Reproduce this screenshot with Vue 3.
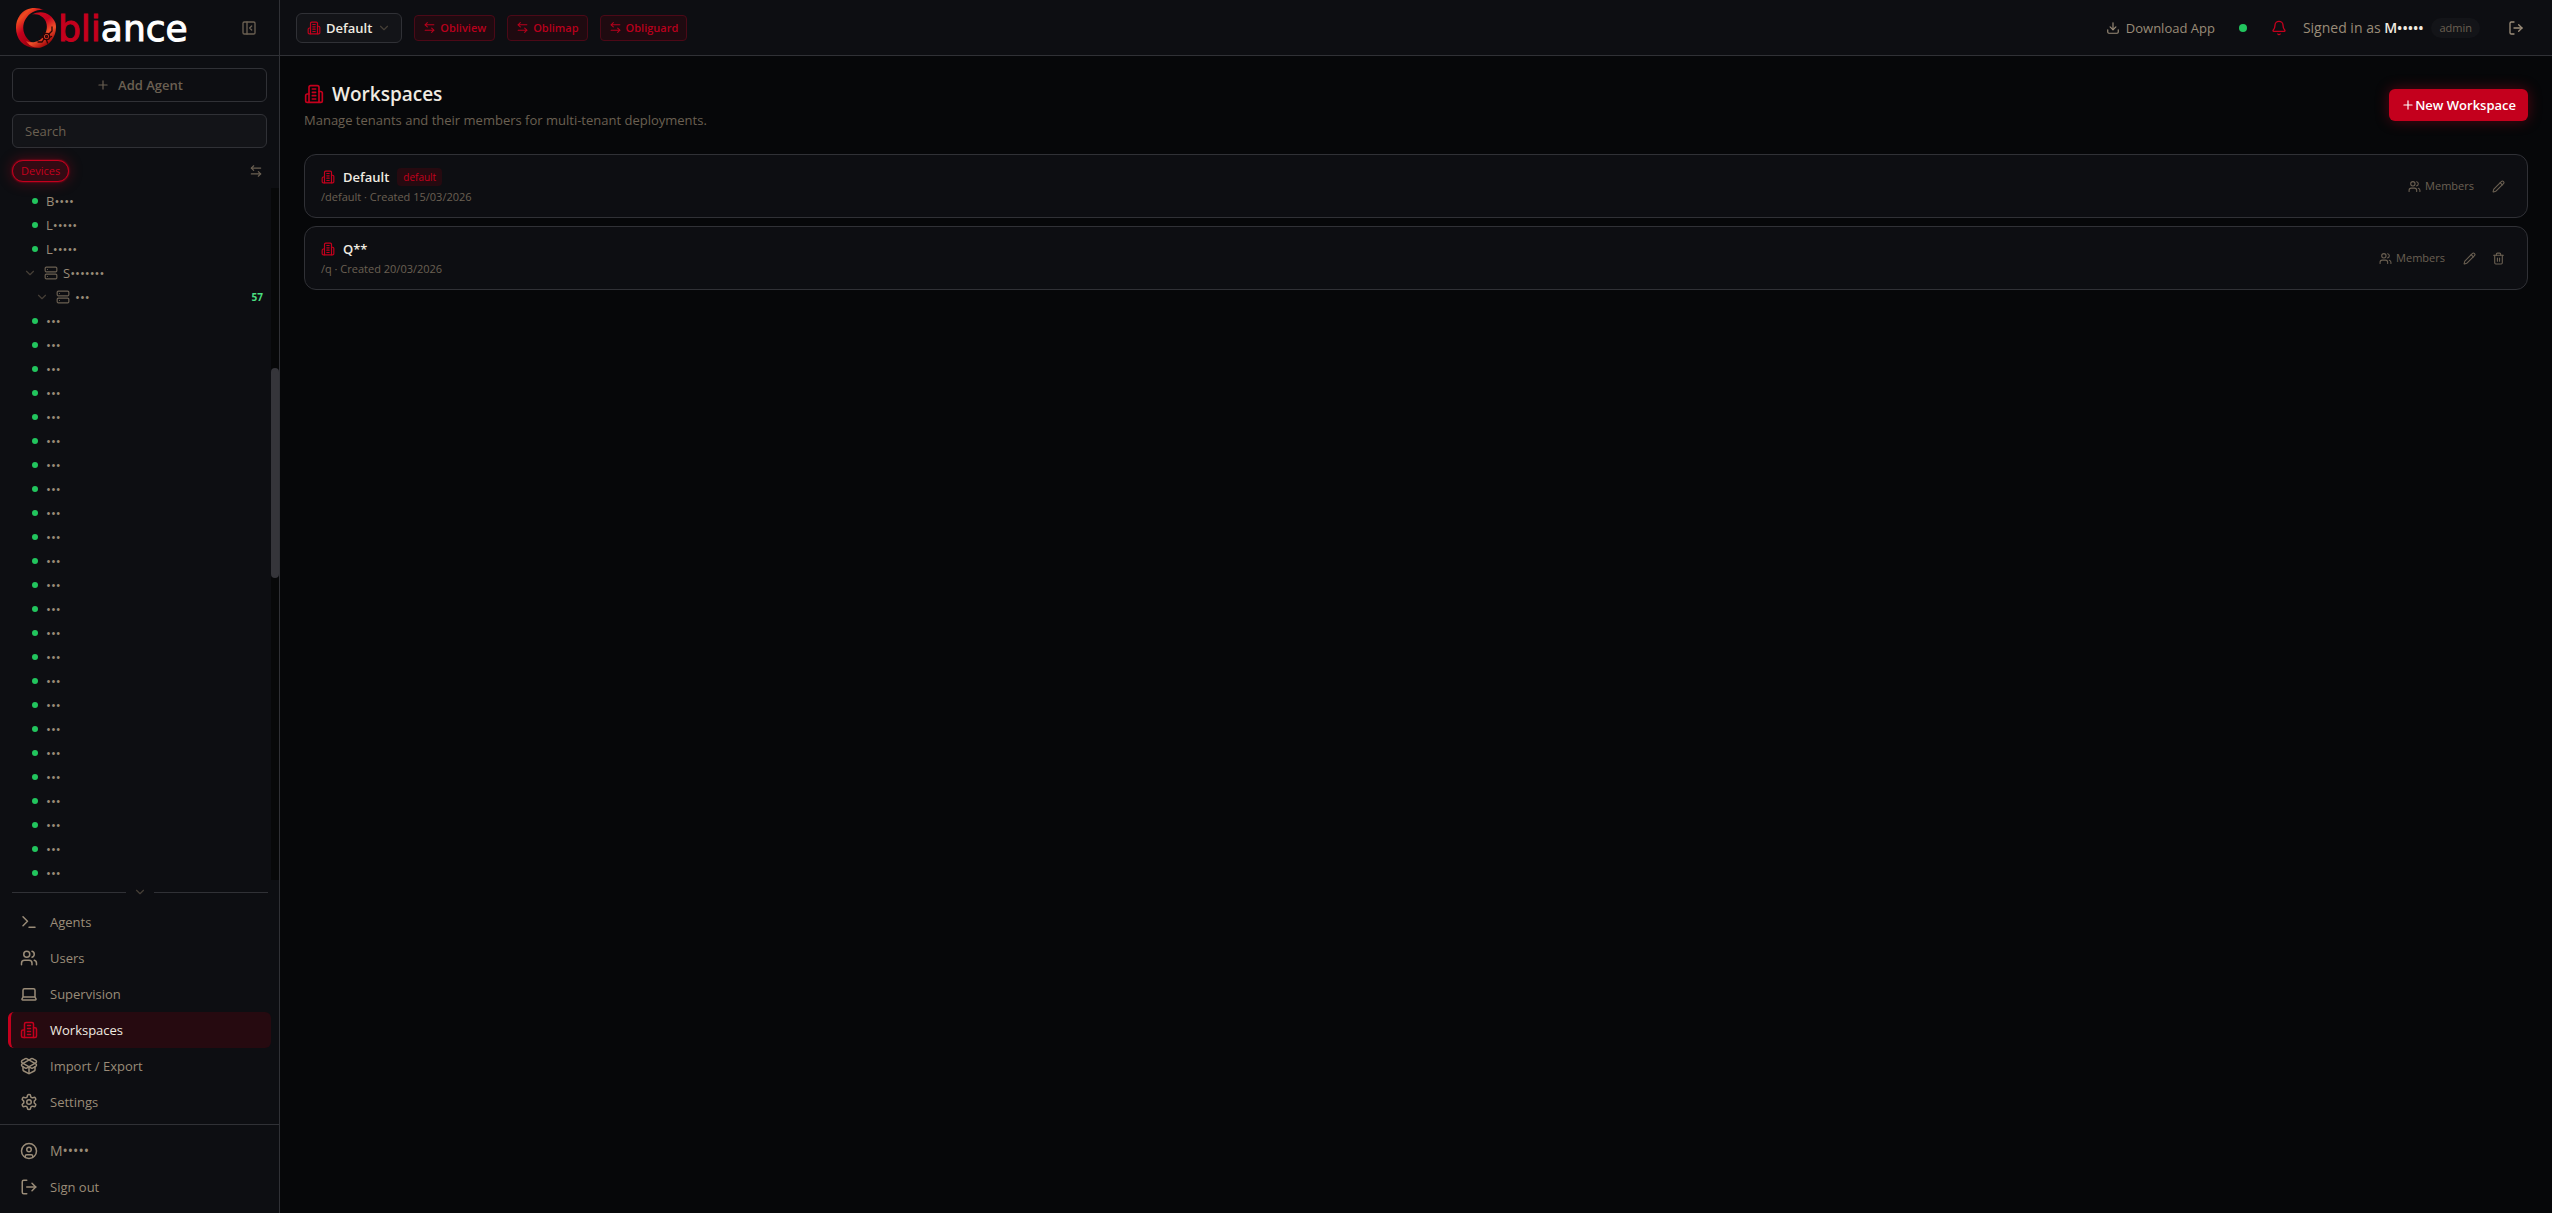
<template>
  <div class="shell">
    <aside class="sidebar">
      <div class="brand">
        <a href="#" class="logo" aria-label="Obliance">
          <svg class="logo-ring" viewBox="0 0 42 42" aria-hidden="true">
            <defs>
              <linearGradient id="ringOuter" x1="0" y1="0" x2="0.7" y2="1">
                <stop offset="0" stop-color="#c8101a" />
                <stop offset="0.25" stop-color="#f04a20" />
                <stop offset="0.5" stop-color="#c4001d" />
                <stop offset="1" stop-color="#8f0008" />
              </linearGradient>
              <linearGradient id="ringInner" x1="0" y1="0" x2="0.6" y2="1">
                <stop offset="0" stop-color="#d01020" />
                <stop offset="0.45" stop-color="#c4001d" />
                <stop offset="0.72" stop-color="#f0522a" />
                <stop offset="1" stop-color="#9c0008" />
              </linearGradient>
            </defs>
            <path
              d="M29 3C20-1 10 1 5 8C-1 16 0 28 6 35C11 40 18 42 26 40C18 37 12 33 9.500 27C6 19 10 9 18 5C22 3 26 2.500 29 3Z"
              fill="url(#ringOuter)"
            />
            <path
              d="M17 7.500C27 2 37 7 40.500 16C43 27 36 38 26 40.500C20 41.500 14 39 11 34C18 37 25 34.500 29 29C33 23 33 15 28 10.500C25 7.500 21 6.500 17 7.500Z"
              fill="url(#ringInner)"
            />
            <g fill="none" stroke="#2a0407" stroke-width="1.300" stroke-linecap="round">
              <circle cx="31.500" cy="29.500" r="3.200" />
              <circle cx="31.500" cy="29.500" r="1" />
              <path d="M34 27L37 24V20M29 32L27 35H23M34.500 30.500l2-1M29.500 27l-1-2M31.500 33l1 3M28 30h-3" />
            </g>
          </svg>
          <span class="logo-text"><span class="logo-accent">bli</span>ance</span>
        </a>
        <button class="icon-button collapse" aria-label="Collapse sidebar">
          <svg class="icon" width="16" height="16" viewBox="0 0 24 24">
            <path v-for="d in icons.panel" :key="d" :d="d" />
          </svg>
        </button>
      </div>

      <div class="tools">
        <button class="add-agent">
          <svg class="icon" width="14" height="14" viewBox="0 0 24 24">
            <path v-for="d in icons.plus" :key="d" :d="d" />
          </svg>
          Add Agent
        </button>
        <input v-model="query" class="search" type="search" placeholder="Search" aria-label="Search" />
        <div class="filter-row">
          <button class="pill">Devices</button>
          <button class="icon-button swap" aria-label="Switch view">
            <svg class="icon" width="14" height="14" viewBox="0 0 24 24">
              <path v-for="d in icons.swap" :key="d" :d="d" />
            </svg>
          </button>
        </div>
      </div>

      <div class="tree">
        <ul class="tree-list">
          <li v-for="(node, i) in nodes" :key="i" :class="['node', node.type]">
            <template v-if="node.type === 'device'">
              <span class="dot"></span>
            </template>
            <template v-else>
              <svg class="icon chevron" width="14" height="14" viewBox="0 0 24 24">
                <path v-for="d in icons.chevron" :key="d" :d="d" />
              </svg>
              <svg class="icon server" width="14" height="14" viewBox="0 0 24 24">
                <path v-for="d in icons.server" :key="d" :d="d" />
              </svg>
            </template>
            <span class="node-name">{{ node.name }}</span>
            <span v-if="node.count" class="node-count">{{ node.count }}</span>
          </li>
        </ul>
        <div class="scroll-track"><div class="scroll-thumb"></div></div>
      </div>

      <div class="divider">
        <span class="line"></span>
        <button class="icon-button chevron" aria-label="Toggle menu">
          <svg class="icon" width="14" height="14" viewBox="0 0 24 24">
            <path v-for="d in icons.chevron" :key="d" :d="d" />
          </svg>
        </button>
        <span class="line"></span>
      </div>

      <nav class="nav">
        <a
          v-for="item in menu"
          :key="item.label"
          href="#"
          :class="['nav-item', { active: item.label === current }]"
          @click.prevent="current = item.label"
        >
          <svg class="icon" width="18" height="18" viewBox="0 0 24 24">
            <path v-for="d in icons[item.icon]" :key="d" :d="d" />
          </svg>
          {{ item.label }}
        </a>
      </nav>

      <div class="account">
        <a href="#" class="nav-item masked">
          <svg class="icon" width="18" height="18" viewBox="0 0 24 24">
            <path v-for="d in icons.user" :key="d" :d="d" />
          </svg>
          M•••••
        </a>
        <button class="nav-item">
          <svg class="icon" width="18" height="18" viewBox="0 0 24 24">
            <path v-for="d in icons.logout" :key="d" :d="d" />
          </svg>
          Sign out
        </button>
      </div>
    </aside>

    <div class="page">
      <header class="topbar">
        <button class="tenant">
          <svg class="icon accent" width="14" height="14" viewBox="0 0 24 24">
            <path v-for="d in icons.building" :key="d" :d="d" />
          </svg>
          Default
          <svg class="icon chevron" width="14" height="14" viewBox="0 0 24 24">
            <path v-for="d in icons.chevron" :key="d" :d="d" />
          </svg>
        </button>
        <a v-for="app in apps" :key="app" href="#" class="app-link">
          <svg class="icon" width="13" height="13" viewBox="0 0 24 24">
            <path v-for="d in icons.swap" :key="d" :d="d" />
          </svg>
          {{ app }}
        </a>

        <div class="topbar-right">
          <a href="#" class="download">
            <svg class="icon" width="14" height="14" viewBox="0 0 24 24">
              <path v-for="d in icons.download" :key="d" :d="d" />
            </svg>
            Download App
          </a>
          <span class="status"></span>
          <button class="icon-button bell" aria-label="Notifications">
            <svg class="icon" width="16" height="16" viewBox="0 0 24 24">
              <path v-for="d in icons.bell" :key="d" :d="d" />
            </svg>
          </button>
          <div class="signed">
            <span>Signed in as <strong>M•••••</strong></span>
            <span class="role">admin</span>
          </div>
          <button class="icon-button exit" aria-label="Sign out">
            <svg class="icon" width="16" height="16" viewBox="0 0 24 24">
              <path v-for="d in icons.logout" :key="d" :d="d" />
            </svg>
          </button>
        </div>
      </header>

      <main class="content">
        <div class="heading">
          <div>
            <h1 class="title">
              <svg class="icon accent" width="20" height="20" viewBox="0 0 24 24">
                <path v-for="d in icons.building" :key="d" :d="d" />
              </svg>
              Workspaces
            </h1>
            <p class="subtitle">Manage tenants and their members for multi-tenant deployments.</p>
          </div>
          <button class="primary">
            <svg class="icon" width="14" height="14" viewBox="0 0 24 24">
              <path v-for="d in icons.plus" :key="d" :d="d" />
            </svg>
            New Workspace
          </button>
        </div>

        <div class="cards">
          <article v-for="ws in workspaces" :key="ws.slug" class="card">
            <div>
              <h2 class="card-title">
                <svg class="icon accent" width="14" height="14" viewBox="0 0 24 24">
                  <path v-for="d in icons.building" :key="d" :d="d" />
                </svg>
                {{ ws.name }}
                <span v-if="ws.isDefault" class="badge">default</span>
              </h2>
              <p class="card-meta">/{{ ws.slug }} · Created {{ ws.created }}</p>
            </div>
            <div class="actions">
              <button class="action members">
                <svg class="icon" width="13" height="13" viewBox="0 0 24 24">
                  <path v-for="d in icons.users" :key="d" :d="d" />
                </svg>
                Members
              </button>
              <button class="action" aria-label="Edit">
                <svg class="icon" width="13" height="13" viewBox="0 0 24 24">
                  <path v-for="d in icons.pencil" :key="d" :d="d" />
                </svg>
              </button>
              <button v-if="!ws.isDefault" class="action" aria-label="Delete">
                <svg class="icon" width="13" height="13" viewBox="0 0 24 24">
                  <path v-for="d in icons.trash" :key="d" :d="d" />
                </svg>
              </button>
            </div>
          </article>
        </div>
      </main>
    </div>
  </div>
</template>

<script setup>
import { ref } from 'vue'

const query = ref('')
const current = ref('Workspaces')

const apps = ['Obliview', 'Oblimap', 'Obliguard']

const menu = [
  { label: 'Agents', icon: 'terminal' },
  { label: 'Users', icon: 'users' },
  { label: 'Supervision', icon: 'laptop' },
  { label: 'Workspaces', icon: 'building' },
  { label: 'Import / Export', icon: 'package' },
  { label: 'Settings', icon: 'settings' }
]

const workspaces = [
  { name: 'Default', slug: 'default', created: '15/03/2026', isDefault: true },
  { name: 'Q**', slug: 'q', created: '20/03/2026', isDefault: false }
]

const nodes = [
  { type: 'device', name: 'B••••' },
  { type: 'device', name: 'L•••••' },
  { type: 'device', name: 'L•••••' },
  { type: 'group', name: 'S•••••••' },
  { type: 'subgroup', name: '•••', count: 57 },
  ...Array.from({ length: 24 }, () => ({ type: 'device', name: '•••' }))
]

// 24x24 stroke icons
const icons = {
  plus: ['M5 12h14', 'M12 5v14'],
  chevron: ['m6 9 6 6 6-6'],
  panel: [
    'M5 3h14a2 2 0 0 1 2 2v14a2 2 0 0 1-2 2H5a2 2 0 0 1-2-2V5a2 2 0 0 1 2-2z',
    'M9 3v18',
    'm16 15-3-3 3-3'
  ],
  swap: ['M8 3 4 7l4 4', 'M4 7h16', 'm16 21 4-4-4-4', 'M20 17H4'],
  server: [
    'M4 2h16a2 2 0 0 1 2 2v4a2 2 0 0 1-2 2H4a2 2 0 0 1-2-2V4a2 2 0 0 1 2-2z',
    'M4 14h16a2 2 0 0 1 2 2v4a2 2 0 0 1-2 2H4a2 2 0 0 1-2-2v-4a2 2 0 0 1 2-2z',
    'M6 6h.01',
    'M6 18h.01'
  ],
  terminal: ['m4 17 6-6-6-6', 'M12 19h8'],
  users: [
    'M16 21v-2a4 4 0 0 0-4-4H6a4 4 0 0 0-4 4v2',
    'M9 3a4 4 0 1 0 0 8 4 4 0 1 0 0-8',
    'M22 21v-2a4 4 0 0 0-3-3.87',
    'M16 3.13a4 4 0 0 1 0 7.75'
  ],
  laptop: [
    'M20 16V7a2 2 0 0 0-2-2H6a2 2 0 0 0-2 2v9m16 0H4m16 0 1.28 2.55a1 1 0 0 1-.9 1.45H3.62a1 1 0 0 1-.9-1.45L4 16'
  ],
  building: [
    'M6 22V4a2 2 0 0 1 2-2h8a2 2 0 0 1 2 2v18Z',
    'M6 12H4a2 2 0 0 0-2 2v6a2 2 0 0 0 2 2h2',
    'M18 9h2a2 2 0 0 1 2 2v9a2 2 0 0 1-2 2h-2',
    'M10 6h4',
    'M10 10h4',
    'M10 14h4',
    'M10 18h4'
  ],
  package: [
    'M12 22v-9',
    'M15.17 2.21a1.67 1.67 0 0 1 1.63 0L21 4.57a1.93 1.93 0 0 1 0 3.36L8.82 14.79a1.655 1.655 0 0 1-1.64 0L3 12.43a1.93 1.93 0 0 1 0-3.36z',
    'M20 13v3.87a2.06 2.06 0 0 1-1.11 1.83l-6 3.08a1.93 1.93 0 0 1-1.78 0l-6-3.08A2.06 2.06 0 0 1 4 16.87V13',
    'M21 12.43a1.93 1.93 0 0 0 0-3.36L8.83 2.2a1.64 1.64 0 0 0-1.63 0L3 4.57a1.93 1.93 0 0 0 0 3.36l12.18 6.86a1.636 1.636 0 0 0 1.63 0z'
  ],
  settings: [
    'M12.22 2h-.44a2 2 0 0 0-2 2v.18a2 2 0 0 1-1 1.73l-.43.25a2 2 0 0 1-2 0l-.15-.08a2 2 0 0 0-2.73.73l-.22.38a2 2 0 0 0 .73 2.73l.15.1a2 2 0 0 1 1 1.72v.51a2 2 0 0 1-1 1.74l-.15.09a2 2 0 0 0-.73 2.73l.22.38a2 2 0 0 0 2.73.73l.15-.08a2 2 0 0 1 2 0l.43.25a2 2 0 0 1 1 1.73V20a2 2 0 0 0 2 2h.44a2 2 0 0 0 2-2v-.18a2 2 0 0 1 1-1.73l.43-.25a2 2 0 0 1 2 0l.15.08a2 2 0 0 0 2.73-.73l.22-.39a2 2 0 0 0-.73-2.73l-.15-.08a2 2 0 0 1-1-1.74v-.5a2 2 0 0 1 1-1.74l.15-.09a2 2 0 0 0 .73-2.73l-.22-.38a2 2 0 0 0-2.73-.73l-.15.08a2 2 0 0 1-2 0l-.43-.25a2 2 0 0 1-1-1.73V4a2 2 0 0 0-2-2z',
    'M12 9a3 3 0 1 0 0 6 3 3 0 1 0 0-6'
  ],
  user: [
    'M12 2a10 10 0 1 0 0 20 10 10 0 1 0 0-20',
    'M12 7a3 3 0 1 0 0 6 3 3 0 1 0 0-6',
    'M7 20.662V19a2 2 0 0 1 2-2h6a2 2 0 0 1 2 2v1.662'
  ],
  logout: ['m16 17 5-5-5-5', 'M21 12H9', 'M9 21H5a2 2 0 0 1-2-2V5a2 2 0 0 1 2-2h4'],
  download: ['M12 15V3', 'M21 15v4a2 2 0 0 1-2 2H5a2 2 0 0 1-2-2v-4', 'm7 10 5 5 5-5'],
  bell: [
    'M10.268 21a2 2 0 0 0 3.464 0',
    'M3.262 15.326A1 1 0 0 0 4 17h16a1 1 0 0 0 .74-1.673C19.41 13.956 18 12.499 18 8A6 6 0 0 0 6 8c0 4.499-1.411 5.956-2.738 7.326'
  ],
  pencil: [
    'M21.174 6.812a1 1 0 0 0-3.986-3.987L3.842 16.174a2 2 0 0 0-.5.83l-1.321 4.352a.5.5 0 0 0 .623.622l4.353-1.32a2 2 0 0 0 .83-.497z',
    'm15 5 4 4'
  ],
  trash: [
    'M3 6h18',
    'M19 6v14a2 2 0 0 1-2 2H7a2 2 0 0 1-2-2V6',
    'M8 6V4a2 2 0 0 1 2-2h4a2 2 0 0 1 2 2v2',
    'M10 11v6',
    'M14 11v6'
  ]
}
</script>

<style>
body {
  margin: 0;
  background: #060709;
}
</style>

<style scoped>
.shell {
  --bg: #060709;
  --panel: #0d0e12;
  --field: #131418;
  --border: #303136;
  --text: #f0ebe1;
  --soft: #9a8c78;
  --muted: #6b6052;
  --accent: #c4001d;
  --green: #22c55e;
  display: flex;
  height: 100vh;
  overflow: hidden;
  background: var(--bg);
  color: var(--text);
  font-family: 'Open Sans', 'Noto Sans', sans-serif;
  font-size: 13px;
  line-height: 20px;
}

.shell *,
.shell *::before {
  box-sizing: border-box;
}

button,
input {
  margin: 0;
  padding: 0;
  border: none;
  background: none;
  color: inherit;
  font: inherit;
}

button {
  cursor: pointer;
}

a {
  color: inherit;
  text-decoration: none;
}

h1,
h2,
p,
ul {
  margin: 0;
  padding: 0;
}

.icon {
  flex: none;
  fill: none;
  stroke: currentColor;
  stroke-width: 2;
  stroke-linecap: round;
  stroke-linejoin: round;
}

.icon-button {
  display: flex;
  color: var(--muted);
}

.accent {
  color: var(--accent);
}

.chevron {
  color: #463f37;
}

.masked {
  font-size: 14px;
}

/* Sidebar */
.sidebar {
  display: flex;
  flex: none;
  flex-direction: column;
  width: 280px;
  border-right: 1px solid var(--border);
  background: var(--panel);
}

.brand {
  display: flex;
  align-items: center;
  justify-content: space-between;
  height: 56px;
  padding: 0 22px 0 15px;
  border-bottom: 1px solid var(--border);
}

.logo {
  display: flex;
  align-items: center;
  gap: 1px;
}

.logo-ring {
  width: 42px;
  height: 42px;
}

.logo-text {
  padding-top: 2px;
  color: #fff;
  font-family: 'DejaVu Sans', sans-serif;
  font-size: 36px;
  line-height: 42px;
  -webkit-text-stroke: 1px currentColor;
}

.logo-accent {
  color: var(--accent);
}

.tools {
  display: flex;
  flex-direction: column;
  gap: 12px;
  padding: 12px 12px 6px;
}

.add-agent {
  display: flex;
  align-items: center;
  justify-content: center;
  gap: 8px;
  height: 34px;
  border: 1px solid var(--border);
  border-radius: 6px;
  color: var(--muted);
  font-weight: 600;
}

.search {
  height: 34px;
  padding: 0 12px;
  border: 1px solid var(--border);
  border-radius: 6px;
  outline: none;
  background: var(--field);
  appearance: none;
}

.search::placeholder {
  color: var(--muted);
  opacity: 1;
}

.filter-row {
  display: flex;
  align-items: center;
  justify-content: space-between;
}

.pill {
  height: 22px;
  padding: 0 8px;
  border: 1px solid var(--accent);
  border-radius: 11px;
  background: #330a13;
  box-shadow: 0 0 2px var(--accent), 0 0 14px rgba(196, 0, 29, 0.4);
  color: var(--accent);
  font-size: 11px;
  line-height: 16px;
}

.swap {
  padding-right: 4px;
}

.tree {
  display: flex;
  flex: 1;
  min-height: 0;
}

.tree-list {
  flex: 1;
  padding-top: 1px;
  overflow: clip;
  overflow-clip-margin: 6px;
  list-style: none;
}

.node {
  display: flex;
  align-items: center;
  height: 24px;
  padding-right: 8px;
  color: var(--soft);
  line-height: 14px;
}

.device {
  gap: 8px;
  padding-left: 32px;
}

.group {
  padding-left: 23px;
}

.subgroup {
  padding-left: 35px;
}

.dot {
  width: 6px;
  height: 6px;
  border-radius: 50%;
  background: var(--green);
}

.server {
  margin: 0 5px 0 7px;
  color: var(--muted);
}

.node-count {
  margin-left: auto;
  color: #4ade80;
  font-size: 10px;
  font-weight: 700;
}

.scroll-track {
  width: 8px;
  padding-top: 180px;
  background: #070809;
}

.scroll-thumb {
  height: 41%;
  border-radius: 4px;
  background: #35353a;
}

.divider {
  display: flex;
  align-items: center;
  gap: 7px;
  height: 24px;
  padding: 0 11px 0 12px;
}

.line {
  flex: 1;
  height: 1px;
  background: var(--border);
}

.nav {
  padding: 0 8px 4px;
}

.nav-item {
  display: flex;
  align-items: center;
  gap: 12px;
  width: 100%;
  height: 36px;
  padding: 0 12px 0 9px;
  border-left: 3px solid transparent;
  border-radius: 6px;
  color: var(--soft);
}

.nav-item.active {
  border-left-color: var(--accent);
  background: #260a10;
  color: var(--text);
  font-weight: 500;
}

.nav-item.active .icon {
  color: var(--accent);
}

.account {
  padding: 8px;
  border-top: 1px solid var(--border);
}

/* Top bar */
.page {
  display: flex;
  flex: 1;
  flex-direction: column;
  min-width: 0;
}

.topbar {
  display: flex;
  align-items: center;
  gap: 12px;
  height: 56px;
  padding: 0 28px 0 16px;
  border-bottom: 1px solid var(--border);
  background: var(--panel);
}

.tenant {
  display: flex;
  align-items: center;
  gap: 5px;
  height: 30px;
  padding: 0 10px;
  border: 1px solid var(--border);
  border-radius: 6px;
  background: var(--field);
  font-weight: 600;
}

.app-link {
  display: flex;
  align-items: center;
  gap: 4px;
  height: 26px;
  padding: 0 8px;
  border: 1px solid #4c0917;
  border-radius: 4px;
  background: #1f0a10;
  color: #b8001c;
  font-size: 11px;
  font-weight: 600;
}

.topbar-right {
  display: flex;
  align-items: center;
  margin-left: auto;
  color: var(--soft);
}

.download {
  display: flex;
  align-items: center;
  gap: 6px;
}

.status {
  width: 8px;
  height: 8px;
  margin: 0 24px;
  border-radius: 50%;
  background: var(--green);
}

.bell {
  color: var(--accent);
}

.signed {
  display: flex;
  align-items: center;
  gap: 8px;
  margin: 0 28px 0 16px;
  font-size: 14px;
}

.signed strong {
  color: var(--text);
  font-weight: 600;
}

.role {
  padding: 0 8px;
  border-radius: 10px;
  background: var(--field);
  color: var(--muted);
  font-size: 11px;
}

.exit {
  color: var(--soft);
}

/* Content */
.content {
  flex: 1;
  padding: 24px;
}

.heading {
  display: flex;
  align-items: center;
  justify-content: space-between;
  margin-bottom: 24px;
}

.title {
  display: flex;
  align-items: center;
  gap: 8px;
  font-size: 19px;
  font-weight: 600;
  line-height: 28px;
}

.subtitle {
  margin-top: 2px;
  color: var(--muted);
}

.primary {
  display: flex;
  align-items: center;
  height: 32px;
  padding: 0 12px;
  border-radius: 6px;
  background: var(--accent);
  box-shadow: 0 0 14px rgba(196, 0, 29, 0.4);
  color: #fff;
  font-weight: 600;
}

.cards {
  display: flex;
  flex-direction: column;
  gap: 8px;
}

.card {
  display: flex;
  align-items: center;
  justify-content: space-between;
  padding: 12px 16px;
  border: 1px solid var(--border);
  border-radius: 12px;
  background: var(--panel);
}

.card-title {
  display: flex;
  align-items: center;
  gap: 8px;
  font-size: 13px;
  font-weight: 600;
  line-height: 20px;
}

.badge {
  padding: 0 6px;
  border-radius: 4px;
  background: #260a10;
  color: var(--accent);
  font-size: 10px;
  font-weight: 500;
  line-height: 18px;
}

.card-meta {
  margin-top: 2px;
  color: var(--muted);
  font-size: 11px;
  line-height: 16px;
}

.actions {
  display: flex;
  align-items: center;
  gap: 4px;
}

.action {
  display: flex;
  align-items: center;
  gap: 4px;
  padding: 6px;
  color: var(--muted);
  font-size: 11px;
  line-height: 16px;
}

.members {
  padding: 6px 8px;
}
</style>
